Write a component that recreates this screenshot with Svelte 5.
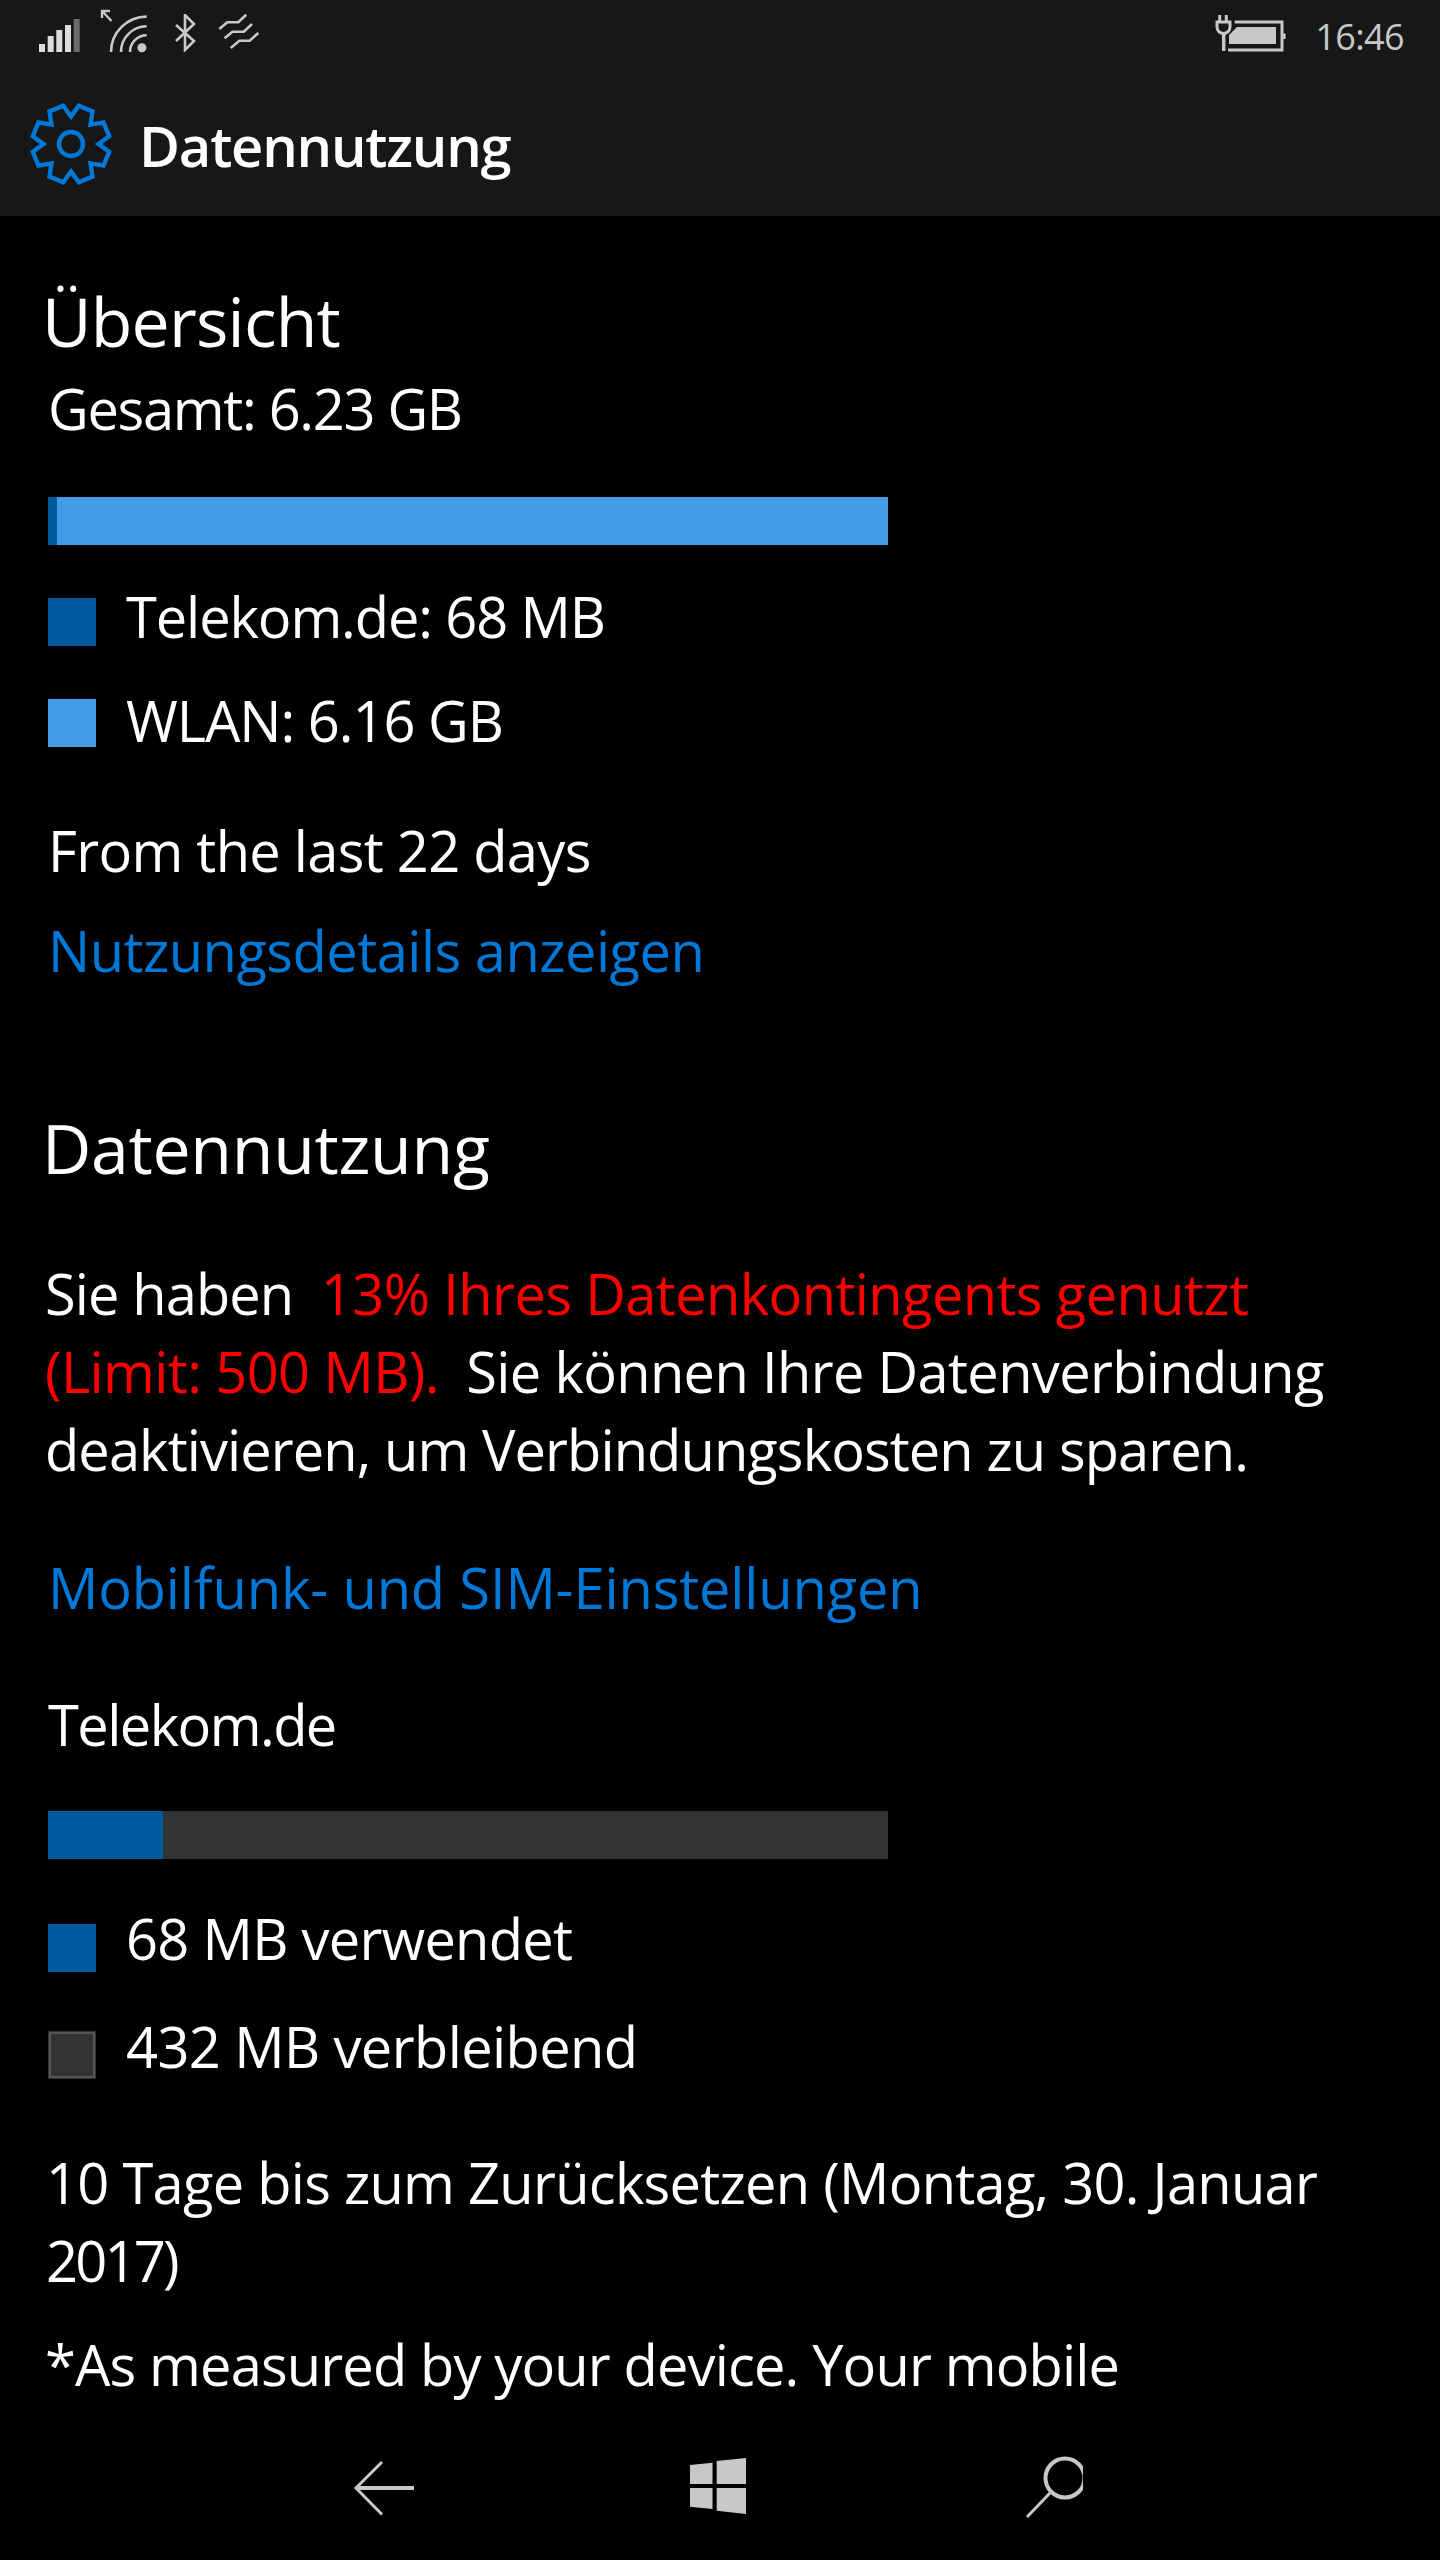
<script>
  const cx = 42, cy = 42;
  function pt(r, deg) {
    const a = (deg - 90) * Math.PI / 180;
    return `${(cx + r * Math.cos(a)).toFixed(2)} ${(cy + r * Math.sin(a)).toFixed(2)}`;
  }
  let d = '';
  for (let k = 0; k < 8; k++) {
    const b = k * 45;
    d += (k ? 'L' : 'M') + pt(27.5, b) + 'L' + pt(39, b + 11.5) + 'L' + pt(39, b + 33.5);
  }
  const gear = d + 'Z';
</script>

<div class="page">
  <header class="top">
    <div class="status">
      <div class="status-left">
        <svg class="signal" width="44" height="36" viewBox="0 0 44 36">
          <rect x="1" y="26" width="6" height="8" fill="#dcdcdc"/>
          <rect x="9.7" y="18" width="6" height="16" fill="#dcdcdc"/>
          <rect x="18.3" y="12" width="6" height="22" fill="#dcdcdc"/>
          <rect x="27" y="7" width="6" height="27" fill="#dcdcdc"/>
          <rect x="35.7" y="1" width="6" height="33" fill="#6b6b6b"/>
        </svg>
        <svg class="wifi" width="50" height="48" viewBox="0 0 50 48" fill="none" stroke="#c8c8c8">
          <path d="M10 3H2V10M2 3L11.500 13" stroke-width="2.4"/>
          <path d="M11 44A35.700 35.700 0 0 1 46.700 8.600" stroke-width="2.6"/>
          <path d="M21 44a25.700 25.700 0 0 1 25.700-25.700" stroke-width="2.6"/>
          <path d="M30 44a16.700 16.700 0 0 1 16.700-16.700" stroke-width="2.6"/>
          <circle cx="41.900" cy="39.700" r="4.500" fill="#c8c8c8" stroke="none"/>
        </svg>
        <svg class="bt" width="21" height="38" viewBox="0 0 21 38" fill="none" stroke="#c8c8c8" stroke-width="2.6">
          <path d="M1 11l18 16-9 9V1l9 9L1 27"/>
        </svg>
        <svg class="sync" width="42" height="38" viewBox="0 0 42 38" fill="none" stroke="#c8c8c8" stroke-width="2.600">
          <path d="M1.300 15L9.300 8.300H20.300L28.200.7"/>
          <path d="M6.500 24.300L14.500 17.700H25.800L34 10"/>
          <path d="M12.700 34L21.400 26.700H31.700L40.300 19"/>
        </svg>
      </div>
      <div class="status-right">
        <svg class="battery" width="71" height="38" viewBox="0 0 71 38" fill="none" stroke="#c8c8c8" stroke-width="3">
          <path d="M4.700 1v7M11.300 1v7"/>
          <path d="M2 8H15V13a6.500 6.500 0 0 1-13 0z"/>
          <path d="M8.700 20v17" stroke-width="3.500"/>
          <path d="M19.700 8H67V36H13"/>
          <path d="M22 13H61V30H14V21z" fill="#c8c8c8" stroke="none"/>
          <rect x="68" y="19.500" width="2.600" height="5.500" fill="#c8c8c8" stroke="none"/>
        </svg>
        <span class="time">16:46</span>
      </div>
    </div>
    <div class="title">
      <svg class="gear" width="84" height="84" viewBox="0 0 84 84" fill="none" stroke="#0078d7" stroke-width="4.400">
        <path d={gear} stroke-linejoin="miter"/>
        <circle cx="42" cy="42" r="12"/>
      </svg>
      <h1>Datennutzung</h1>
    </div>
  </header>

  <main class="content">
    <h2 class="overview">Übersicht</h2>
    <p class="total">Gesamt: 6.23 GB</p>
    <div class="bar first"><span class="seg dark" style="width: 9px"></span><span class="seg light"></span></div>
    <div class="legend l1"><span class="sq dark"></span><span>Telekom.de: 68 MB</span></div>
    <div class="legend l2"><span class="sq light"></span><span>WLAN: 6.16 GB</span></div>
    <p class="days">From the last 22 days</p>
    <a class="link details">Nutzungsdetails anzeigen</a>

    <h2 class="usage">Datennutzung</h2>
    <p class="para">Sie haben <span class="red">&nbsp;13% Ihres Datenkontingents genutzt (Limit: 500 MB).</span> &nbsp;<span class="rest">Sie können Ihre Datenverbindung</span> deaktivieren, um Verbindungskosten zu sparen.</p>
    <a class="link sim">Mobilfunk- und SIM-Einstellungen</a>
    <p class="carrier">Telekom.de</p>
    <div class="bar second"><span class="seg dark" style="width: 115px"></span><span class="seg grey"></span></div>
    <div class="legend l3"><span class="sq dark"></span><span>68 MB verwendet</span></div>
    <div class="legend l4"><span class="sq grey boxed"></span><span>432 MB verbleibend</span></div>
    <p class="reset">10 Tage bis zum Zurücksetzen (Montag, 30. Januar <span class="year">2017)</span></p>
    <p class="note">*As measured by your device. Your mobile</p>
  </main>

  <nav class="nav">
    <svg width="64" height="64" viewBox="0 0 64 64" fill="none" stroke="#c8c8c8">
      <path d="M3 32H61" stroke-width="4"/>
      <path d="M29 6L3 32L29 58.500" stroke-width="3"/>
    </svg>
    <svg width="64" height="64" viewBox="0 0 64 64" fill="#c8c8c8">
      <path d="M4 9L26.500 6.700V28H4ZM30.700 5L60 2V28H30.700ZM4 32H26.500V53L4 50.700ZM30.700 32H60V58L30.700 54.700Z"/>
    </svg>
    <svg width="64" height="64" viewBox="0 0 64 64" fill="none" stroke="#c8c8c8">
      <circle cx="46" cy="22" r="19.500" stroke-width="4"/>
      <path d="M31 37L8 61" stroke-width="3"/>
    </svg>
  </nav>
</div>

<style>
  :global(body) { margin: 0; background: #000; }
  .page {
    width: 1440px; height: 2560px; background: #000; color: #fff;
    display: flex; flex-direction: column; overflow: hidden;
    font-family: "Open Sans", "Noto Sans", sans-serif;
  }
  .top { background: #171717; height: 216px; flex: none; }
  .status { height: 72px; display: flex; justify-content: space-between; align-items: center; padding: 0 36px 0 38px; }
  .status-left { display: flex; align-items: center; gap: 0; }
  .signal { margin-right: 18px; }
  .wifi { margin-right: 25px; margin-top: -8px; }
  .bt { margin-right: 22px; margin-top: -6px; }
  .sync { margin-top: -6px; }
  .battery { margin-top: -6px; }
  .status-right { display: flex; align-items: center; gap: 29px; }
  .time { font-size: 36px; color: #c8c8c8; letter-spacing: -0.6px; }
  .title { height: 144px; display: flex; align-items: center; padding-left: 29px; gap: 26px; }
  .title h1 { margin: 0; padding-top: 2px; font-size: 56px; font-weight: 600; letter-spacing: -1.2px; }
  .content { flex: 1; min-height: 0; overflow: hidden; font-size: 56px; line-height: 78px; letter-spacing: -1.4px; padding-left: 48px; }
  h2, p { margin: 0; font-weight: 400; }
  .link { display: block; color: #0078d7; }
  .red { color: #f00; letter-spacing: -0.6px; }
  .rest { letter-spacing: -0.65px; }
  h2 { font-size: 68px; line-height: 90px; margin-left: -6px; }
  .overview { margin-top: 60px; letter-spacing: -0.8px; }
  .total { margin-top: 3px; letter-spacing: -1.3px; }
  .bar { width: 840px; height: 48px; display: flex; }
  .first { margin-top: 50px; }
  .second { margin-top: 48px; }
  .seg { display: block; height: 100%; }
  .seg:last-child { flex: 1; }
  .dark { background: #005a9e; }
  .light { background: #419ce5; }
  .grey { background: #333; }
  .legend { display: flex; align-items: flex-start; gap: 30px; }
  .sq { width: 48px; height: 48px; flex: none; box-sizing: border-box; margin-top: 18px; }
  .boxed { box-shadow: inset 0 0 0 1px #333, inset 0 0 0 3px #555; }
  .l1 { margin-top: 32px; letter-spacing: -1.1px; }
  .l1 .sq { margin-top: 21px; }
  .l2 { margin-top: 26px; letter-spacing: -1px; }
  .days { margin-top: 52px; letter-spacing: -0.7px; }
  .details { margin-top: 22px; letter-spacing: -0.5px; }
  .usage { margin-top: 114px; letter-spacing: -0.3px; }
  .para { margin-top: 61px; margin-left: -3px; width: 1345px; letter-spacing: -0.9px; }
  .sim { margin-top: 60px; letter-spacing: -0.15px; }
  .carrier { margin-top: 59px; letter-spacing: -1.55px; }
  .l3 { margin-top: 40px; letter-spacing: -0.7px; }
  .l3 .sq { margin-top: 25px; }
  .l4 { margin-top: 30px; letter-spacing: -0.6px; }
  .l4 .sq { margin-top: 24px; }
  .reset { margin-top: 58px; margin-left: -2px; width: 1322px; letter-spacing: -0.72px; }
  .year { letter-spacing: -2.8px; }
  .note { margin-top: 26px; margin-left: -3px; letter-spacing: -0.85px; }
  .nav { height: 144px; flex: none; background: #000; display: flex; align-items: center; padding-left: 353px; gap: 269px; }
</style>
